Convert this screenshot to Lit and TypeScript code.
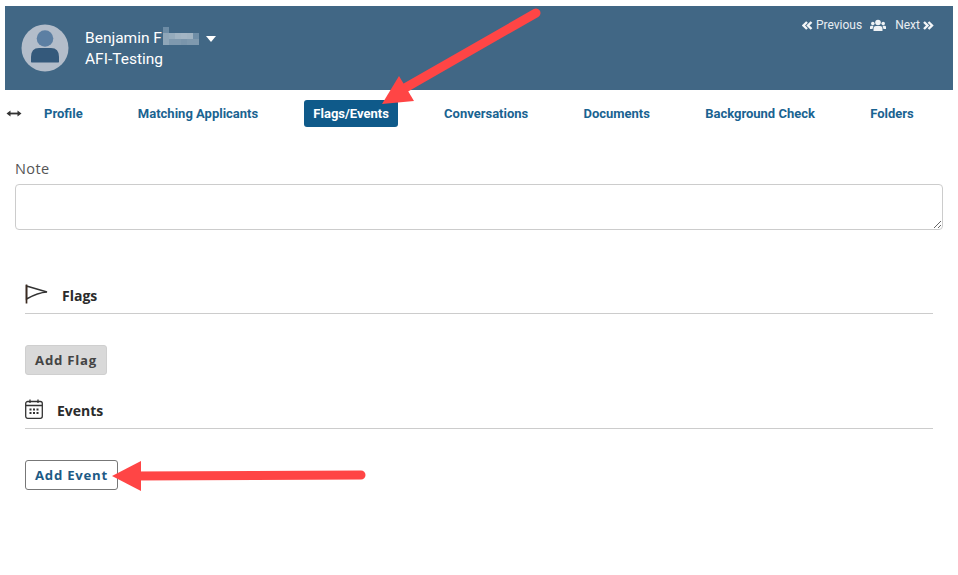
import { LitElement, html, css, svg } from "lit";
import { customElement } from "lit/decorators.js";

const TABS = ["Profile", "Matching Applicants", "Flags/Events", "Conversations", "Documents", "Background Check", "Folders"];
const MOSAIC = [
  "#6d8ca5", "#416785", "#416785", "#416785", "#416785", "#416785",
  "#8fa6b8", "#95abbc", "#a0b3c2", "#a3b5c4", "#a0b3c2", "#6f8ea7",
  "#8fa6b8", "#7f99ae", "#7f99ae", "#7a95ab", "#7f99ae", "#7f99ae",
];

@customElement("app-root")
export class AppRoot extends LitElement {
  static styles = css`
    :host { display: block; position: relative; width: 958px; height: 575px; background: #fff; overflow: hidden; font-family: "Open Sans", sans-serif; }
    .page { padding-top: 6px; }
    .header { margin: 0 5px; height: 84px; background: #416785; display: flex; justify-content: space-between; color: #fff; font-family: Roboto, sans-serif; }
    .who { display: flex; align-items: center; padding-left: 16px; gap: 16px; }
    .avatar { width: 48px; height: 48px; display: block; }
    .text { margin-top: 2px; }
    .name { font-size: 15.5px; line-height: 21px; display: flex; align-items: center; }
    .org { font-size: 15.5px; line-height: 21px; }
    .blur { display: grid; grid-template-columns: repeat(6, 6px); grid-auto-rows: 6px; margin: -5px 0 0 1px; }
    .caret { width: 0; height: 0; border-left: 5.5px solid transparent; border-right: 5.5px solid transparent; border-top: 6px solid #fff; margin-left: 7px; }
    .pager { display: flex; align-items: flex-start; padding: 12px 19px 0 0; font-size: 12px; line-height: 15px; color: #e9eef2; gap: 9px; }
    .pager span { display: inline-flex; align-items: center; gap: 3px; }
    .pager .prev { margin-right: -1px; }
    .pager svg { display: block; }
    .people { margin-top: 1px; }
    .tabs { display: flex; align-items: center; height: 47px; position: relative; padding-left: 44px; font-family: Roboto, sans-serif; font-size: 13px; font-weight: 700; color: #1a6391; }
    .swap { position: absolute; left: 6px; top: 19px; }
    .tab { padding: 0 9.5px; height: 27px; line-height: 27px; margin-left: -9.5px; margin-right: 45.7px; white-space: nowrap; border-radius: 3px; }
    .tab.active { background: #0f5a8a; color: #fff; }
    .body { padding: 0 15px; }
    label { display: block; font-size: 14.5px; line-height: 20px; color: #555; letter-spacing: 0.4px; margin-top: 22px; }
    textarea { display: block; box-sizing: border-box; width: 928px; height: 46px; margin-top: 5px; border: 1px solid #ccc; border-radius: 4px; background: #fff; outline: none; }
    .section { margin: 0 10px; width: 908px; }
    .head { display: flex; align-items: center; box-sizing: border-box; padding-top: 4px; border-bottom: 1px solid #ccc; font-size: 14px; font-weight: 700; color: #2b2b2b; gap: 14px; }
    .head svg { margin-top: -4px; }
    .flags { height: 40px; margin-top: 44px; }
    .events { height: 40px; }
    button { display: block; box-sizing: border-box; height: 30px; padding: 0; font-family: "Open Sans", sans-serif; font-weight: 700; font-size: 13.2px; letter-spacing: 0.75px; border-radius: 3px; }
    .flag-btn { width: 82px; background: #d9d9d9; border: 1px solid #cfcfcf; color: #444; margin: 31px 0 14px; }
    .event-btn { width: 93px; background: #fff; border: 1px solid #777; color: #1d5a85; margin-top: 31px; }
    .overlay { position: absolute; left: 0; top: 0; pointer-events: none; }
  `;

  private arrows() {
    return svg`
      <path d="M536 13 L398 92" stroke="#ff4545" stroke-width="9" stroke-linecap="round" fill="none"/>
      <path d="M382 104 L399 76 L414 101 Z" fill="#ff4545"/>
      <path d="M361 475 L132 476" stroke="#ff4545" stroke-width="9" stroke-linecap="round" fill="none"/>
      <path d="M112 476 L141 461 L141 491 Z" fill="#ff4545"/>
    `;
  }

  private chevrons(left: boolean) {
    const d = left
      ? "M5 1 L1.5 4.5 L5 8 M9.5 1 L6 4.5 L9.5 8"
      : "M1 1 L4.5 4.5 L1 8 M5.5 1 L9 4.5 L5.500 8";
    return html`<svg width="11" height="9" viewBox="0 0 11 9"><path d="${d}" fill="none" stroke="#f4f6f8" stroke-width="2.4"/></svg>`;
  }

  render() {
    return html`
      <div class="page">
        <div class="header">
          <div class="who">
            <svg class="avatar" viewBox="0 0 48 48">
              <circle cx="24" cy="24" r="23.5" fill="#b3bdca"/>
              <circle cx="24" cy="14.500" r="8.300" fill="#5c7fa3"/>
              <path d="M10 38 V33 Q10 24 18 24 H30 Q38 24 38 33 V38 Q38 38.500 36 38.500 H12 Q10 38.500 10 38 Z" fill="#34597b"/>
            </svg>
            <div class="text">
              <div class="name">Benjamin F<span class="blur">${MOSAIC.map((c) => html`<i style="background:${c}"></i>`)}</span><span class="caret"></span></div>
              <div class="org">AFI-Testing</div>
            </div>
          </div>
          <div class="pager">
            <span class="prev">${this.chevrons(true)}Previous</span>
            <svg class="people" width="16" height="13" viewBox="0 0 16 13">
              <circle cx="8" cy="3.500" r="2.800" fill="#eef2f5"/><circle cx="2.800" cy="4.500" r="1.800" fill="#eef2f5"/><circle cx="13.200" cy="4.500" r="1.800" fill="#eef2f5"/>
              <path d="M3.500 12 V9.500 Q3.500 7 6 7 H10 Q12.500 7 12.500 9.500 V12 Z M0 10 V8 Q0 6.800 1.500 6.800 H3.500 L2.500 10 Z M16 10 V8 Q16 6.800 14.500 6.800 H12.500 L13.500 10 Z" fill="#eef2f5"/>
            </svg>
            <span>Next${this.chevrons(false)}</span>
          </div>
        </div>
        <div class="tabs">
          <svg class="swap" width="16" height="9" viewBox="0 0 16 9"><path d="M3 4.500 H13" stroke="#333" stroke-width="1.800"/><path d="M0.500 4.500 L4.500 1.500 V7.500 Z M15.500 4.500 L11.500 1.500 V7.500 Z" fill="#333"/></svg>
          ${TABS.map((t) => html`<div class="tab ${t === "Flags/Events" ? "active" : ""}">${t}</div>`)}
        </div>
        <div class="body">
          <label>Note</label>
          <textarea></textarea>
          <div class="section">
            <div class="head flags">
              <svg width="23" height="20" viewBox="0 0 23 20"><path d="M1.500 2 L22 8 Q13 8.500 1.500 15 Z" fill="#fff" stroke="#333" stroke-width="1.500"/><path d="M1.500 .5 V19.500" stroke="#3b2a20" stroke-width="1.700"/></svg>
              <span>Flags</span>
            </div>
            <button class="flag-btn">Add Flag</button>
            <div class="head events">
              <svg width="18" height="20" viewBox="0 0 18 20"><rect x="0.700" y="2.500" width="16.600" height="16.800" rx="2" fill="none" stroke="#333" stroke-width="1.300"/><path d="M1 6.500 H17 M5 .5 V4 M13 .5 V4" stroke="#333" stroke-width="1.300"/><path d="M4.500 9.500 h2 v2 h-2 Z M8 9.500 h2 v2 h-2 Z M11.500 9.500 h2 v2 h-2 Z M4.500 13 h2 v2 h-2 Z M8 13 h2 v2 h-2 Z M11.500 13 h2 v2 h-2 Z" fill="#333"/></svg>
              <span>Events</span>
            </div>
            <button class="event-btn">Add Event</button>
          </div>
        </div>
      </div>
      <svg class="overlay" width="958" height="575">${this.arrows()}</svg>
    `;
  }
}
